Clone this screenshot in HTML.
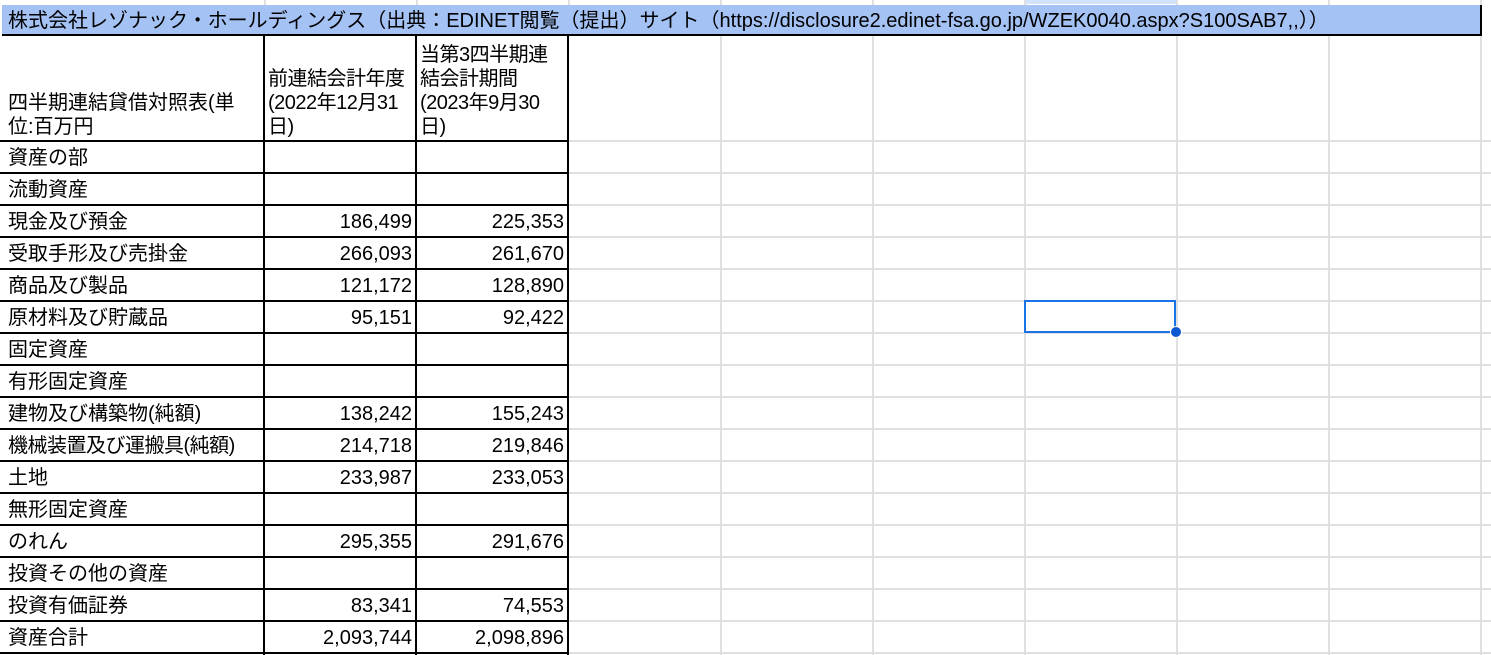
<!DOCTYPE html>
<html><head><meta charset="utf-8"><style>
body{margin:0;width:1491px;height:655px;overflow:hidden;background:#fff;position:relative;font-family:"Liberation Sans","Noto Sans CJK JP",sans-serif;font-size:20px;color:#000}
.gv{position:absolute;width:2px;background:#e0e0e0;top:0;height:655px}
.gh{position:absolute;height:2px;background:#e0e0e0;left:0;width:1491px}
.bv{position:absolute;width:2px;background:#000}
.bh{position:absolute;height:2px;background:#000}
.c{position:absolute;height:32px;line-height:34px;white-space:nowrap}
.r{text-align:right}
</style></head><body>
<div class="gv" style="left:720px"></div><div class="gv" style="left:872px"></div><div class="gv" style="left:1024px"></div><div class="gv" style="left:1176px"></div><div class="gv" style="left:1328px"></div><div class="gv" style="left:1480px"></div>
<div class="gh" style="top:140px"></div><div class="gh" style="top:172px"></div><div class="gh" style="top:204px"></div><div class="gh" style="top:236px"></div><div class="gh" style="top:268px"></div><div class="gh" style="top:300px"></div><div class="gh" style="top:332px"></div><div class="gh" style="top:364px"></div><div class="gh" style="top:396px"></div><div class="gh" style="top:428px"></div><div class="gh" style="top:460px"></div><div class="gh" style="top:492px"></div><div class="gh" style="top:524px"></div><div class="gh" style="top:556px"></div><div class="gh" style="top:588px"></div><div class="gh" style="top:620px"></div><div class="gh" style="top:652px"></div>
<div class="gv" style="left:264px;height:5px"></div><div class="gv" style="left:416px;height:5px"></div><div class="gv" style="left:568px;height:5px"></div>
<div style="position:absolute;left:1026px;top:0;width:150px;height:4px;background:#d3e3fd"></div>
<div style="position:absolute;left:2px;top:5px;height:31px;background:#a4c2f4;border-right:2px solid #000;border-bottom:2px solid #000;line-height:33px;padding-left:6px;box-sizing:border-box;width:1480px;white-space:nowrap">株式会社レゾナック・ホールディングス（出典：EDINET閲覧（提出）サイト（https://disclosure2.edinet-fsa.go.jp/WZEK0040.aspx?S100SAB7,,））</div>
<div style="position:absolute;left:0;top:37px;width:568px;height:618px;background:#fff"></div>
<div class="bv" style="left:263px;top:36px;height:619px"></div><div class="bv" style="left:415px;top:36px;height:619px"></div><div class="bv" style="left:567px;top:36px;height:619px"></div>
<div class="bh" style="left:0;width:569px;top:140px"></div><div class="bh" style="left:0;width:569px;top:172px"></div><div class="bh" style="left:0;width:569px;top:204px"></div><div class="bh" style="left:0;width:569px;top:236px"></div><div class="bh" style="left:0;width:569px;top:268px"></div><div class="bh" style="left:0;width:569px;top:300px"></div><div class="bh" style="left:0;width:569px;top:332px"></div><div class="bh" style="left:0;width:569px;top:364px"></div><div class="bh" style="left:0;width:569px;top:396px"></div><div class="bh" style="left:0;width:569px;top:428px"></div><div class="bh" style="left:0;width:569px;top:460px"></div><div class="bh" style="left:0;width:569px;top:492px"></div><div class="bh" style="left:0;width:569px;top:524px"></div><div class="bh" style="left:0;width:569px;top:556px"></div><div class="bh" style="left:0;width:569px;top:588px"></div><div class="bh" style="left:0;width:569px;top:620px"></div><div class="bh" style="left:0;width:569px;top:652px"></div>
<div style="position:absolute;left:8px;top:91px;line-height:24px">四半期連結貸借対照表(単<br>位:百万円</div>
<div style="position:absolute;left:268px;top:67px;line-height:24px;letter-spacing:-0.5px">前連結会計年度<br>(2022年12月31<br>日)</div>
<div style="position:absolute;left:420px;top:43px;line-height:24px;letter-spacing:-0.5px">当第3四半期連<br>結会計期間<br>(2023年9月30<br>日)</div>
<div class="c" style="left:8px;top:141px">資産の部</div>
<div class="c" style="left:8px;top:173px">流動資産</div>
<div class="c" style="left:8px;top:205px">現金及び預金</div><div class="c r" style="left:266px;width:146px;top:205px">186,499</div><div class="c r" style="left:418px;width:146px;top:205px">225,353</div>
<div class="c" style="left:8px;top:237px">受取手形及び売掛金</div><div class="c r" style="left:266px;width:146px;top:237px">266,093</div><div class="c r" style="left:418px;width:146px;top:237px">261,670</div>
<div class="c" style="left:8px;top:269px">商品及び製品</div><div class="c r" style="left:266px;width:146px;top:269px">121,172</div><div class="c r" style="left:418px;width:146px;top:269px">128,890</div>
<div class="c" style="left:8px;top:301px">原材料及び貯蔵品</div><div class="c r" style="left:266px;width:146px;top:301px">95,151</div><div class="c r" style="left:418px;width:146px;top:301px">92,422</div>
<div class="c" style="left:8px;top:333px">固定資産</div>
<div class="c" style="left:8px;top:365px">有形固定資産</div>
<div class="c" style="left:8px;top:397px">建物及び構築物(純額)</div><div class="c r" style="left:266px;width:146px;top:397px">138,242</div><div class="c r" style="left:418px;width:146px;top:397px">155,243</div>
<div class="c" style="left:8px;top:429px;letter-spacing:-0.5px">機械装置及び運搬具(純額)</div><div class="c r" style="left:266px;width:146px;top:429px">214,718</div><div class="c r" style="left:418px;width:146px;top:429px">219,846</div>
<div class="c" style="left:8px;top:461px">土地</div><div class="c r" style="left:266px;width:146px;top:461px">233,987</div><div class="c r" style="left:418px;width:146px;top:461px">233,053</div>
<div class="c" style="left:8px;top:493px">無形固定資産</div>
<div class="c" style="left:8px;top:525px">のれん</div><div class="c r" style="left:266px;width:146px;top:525px">295,355</div><div class="c r" style="left:418px;width:146px;top:525px">291,676</div>
<div class="c" style="left:8px;top:557px">投資その他の資産</div>
<div class="c" style="left:8px;top:589px">投資有価証券</div><div class="c r" style="left:266px;width:146px;top:589px">83,341</div><div class="c r" style="left:418px;width:146px;top:589px">74,553</div>
<div class="c" style="left:8px;top:621px">資産合計</div><div class="c r" style="left:266px;width:146px;top:621px">2,093,744</div><div class="c r" style="left:418px;width:146px;top:621px">2,098,896</div>
<div style="position:absolute;left:1024px;top:300px;width:152px;height:33px;border:2px solid #1a73e8;box-sizing:border-box"></div>
<div style="position:absolute;left:1170px;top:326px;width:12px;height:12px;border-radius:50%;background:#0b57d0;border:1px solid #fff;box-sizing:border-box"></div>
</body></html>
